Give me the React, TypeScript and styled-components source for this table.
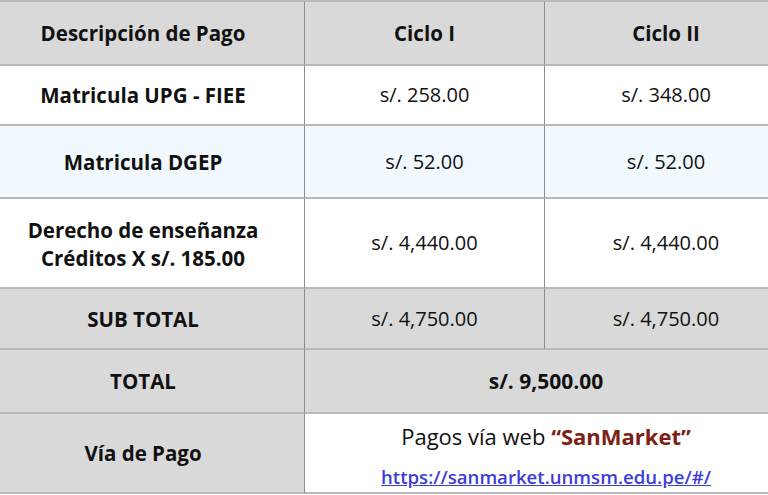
import React from "react";
import styled, { createGlobalStyle } from "styled-components";

const Global = createGlobalStyle`
  html, body { margin: 0; padding: 0; background: #ffffff; overflow: hidden; }
  body { font-family: "Open Sans", "Noto Sans", sans-serif; color: #111; }
`;

const Table = styled.div`
  display: grid;
  grid-template-columns: 323px 240px 242px;
  grid-template-rows: 64px 60px 73px 90px 61px 64px 80px;
  width: 805px;
  margin-left: -18px;
  border-top: 2px solid #b9b9b9;
`;

type CellProps = { $bg?: string; $span?: number; $last?: boolean; $bold?: boolean; $size?: number; $padTop?: number };

const Cell = styled.div<CellProps>`
  display: flex;
  flex-direction: column;
  align-items: center;
  justify-content: center;
  text-align: center;
  padding-top: ${(p) => p.$padTop || 0}px;
  background: ${(p) => p.$bg || "#ffffff"};
  border-bottom: 2px solid #b9b9b9;
  border-right: ${(p) => (p.$last ? "none" : "1px solid #8c8c8c")};
  grid-column: ${(p) => (p.$span ? `span ${p.$span}` : "auto")};
  font-size: ${(p) => (p.$size ? p.$size : p.$bold ? 20.5 : 20)}px;
  line-height: 28px;
  font-weight: ${(p) => (p.$bold ? 700 : 400)};
  color: #111;
  box-sizing: border-box;
`;

const PayLine = styled.span`
  font-size: 22px;
  line-height: 28px;
  font-weight: 400;
`;

const Brand = styled.span`
  font-weight: 700;
  color: #7d2116;
`;

const Link = styled.a`
  margin-top: 14px;
  font-size: 18.6px;
  line-height: 26px;
  font-weight: 600;
  color: #3d3dd8;
  text-decoration: underline;
`;

const GRAY = "#d9d9d9";
const BLUE = "#f1f8fe";

export default function App() {
  return (
    <>
      <Global />
      <Table>
        <Cell $bg={GRAY} $bold>Descripción de Pago</Cell>
        <Cell $bg={GRAY} $bold>Ciclo I</Cell>
        <Cell $bg={GRAY} $bold $last>Ciclo II</Cell>

        <Cell $bold>Matricula UPG - FIEE</Cell>
        <Cell>s/. 258.00</Cell>
        <Cell $last>s/. 348.00</Cell>

        <Cell $bg={BLUE} $bold>Matricula DGEP</Cell>
        <Cell $bg={BLUE}>s/. 52.00</Cell>
        <Cell $bg={BLUE} $last>s/. 52.00</Cell>

        <Cell $bold $padTop={2}>
          <span>Derecho de enseñanza</span>
          <span>Créditos X s/. 185.00</span>
        </Cell>
        <Cell>s/. 4,440.00</Cell>
        <Cell $last>s/. 4,440.00</Cell>

        <Cell $bg={GRAY} $bold>SUB TOTAL</Cell>
        <Cell $bg={GRAY}>s/. 4,750.00</Cell>
        <Cell $bg={GRAY} $last>s/. 4,750.00</Cell>

        <Cell $bg={GRAY} $bold>TOTAL</Cell>
        <Cell $bg={GRAY} $bold $size={21} $span={2} $last>s/. 9,500.00</Cell>

        <Cell $bg={GRAY} $bold>Vía de Pago</Cell>
        <Cell $span={2} $last $padTop={6}>
          <PayLine>
            Pagos vía web <Brand>“SanMarket”</Brand>
          </PayLine>
          <Link href="#">https://sanmarket.unmsm.edu.pe/#/</Link>
        </Cell>
      </Table>
    </>
  );
}
